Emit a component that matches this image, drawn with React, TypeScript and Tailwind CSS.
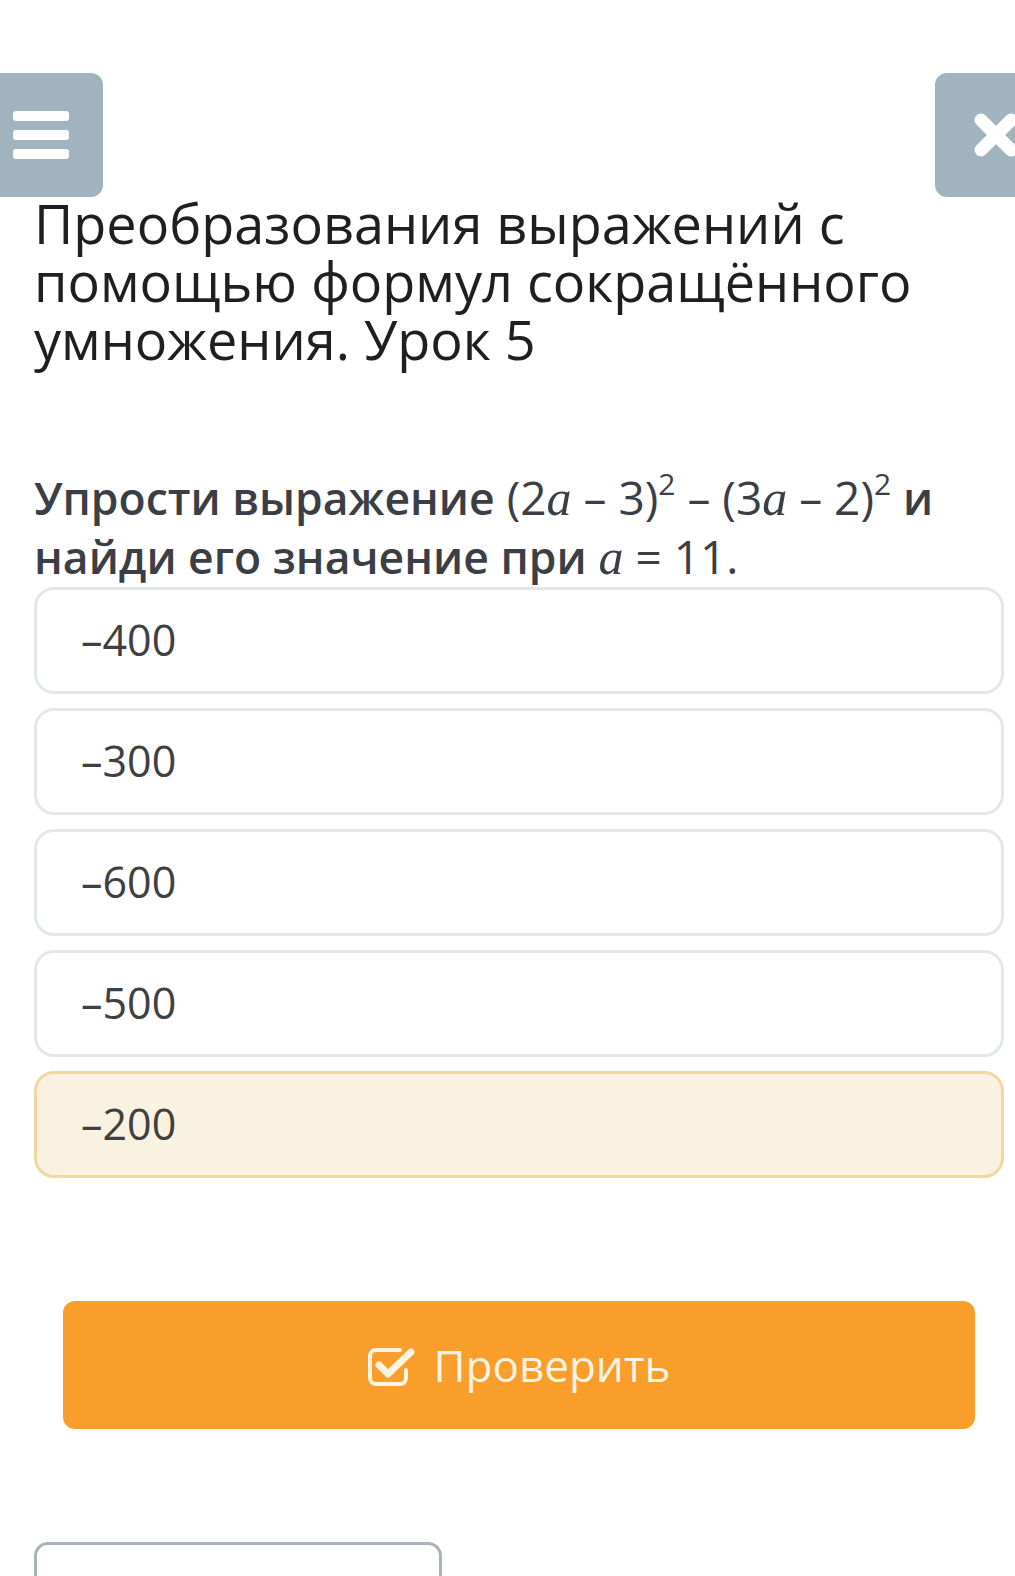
import React from "react";

const options = ["–400", "–300", "–600", "–500", "–200"];
const selected = 4;

const MathA: React.FC = () => (
  <span className="font-['Liberation_Serif',serif] italic text-[50px] font-normal">a</span>
);

const Sq: React.FC = () => (
  <span className="relative top-[-20px] text-[30px] leading-none">2</span>
);

const App: React.FC = () => {
  return (
    <div className="w-[1015px] h-[1576px] overflow-hidden bg-white font-['Open_Sans',sans-serif]">
      {/* top bar */}
      <div className="flex justify-between pt-[73px]">
        <button className="w-[103px] h-[124px] bg-[#a0b3bf] rounded-r-[12px] flex flex-col justify-center gap-[9px] pl-[13px]">
          <span className="block w-[56px] h-[10px] rounded-[3px] bg-white" />
          <span className="block w-[56px] h-[10px] rounded-[3px] bg-white" />
          <span className="block w-[56px] h-[10px] rounded-[3px] bg-white" />
        </button>
        <button className="w-[80px] h-[124px] bg-[#a0b3bf] rounded-l-[12px] overflow-hidden flex items-center pl-[38px]">
          <svg width="46" height="46" viewBox="0 0 46 46" className="shrink-0">
            <path
              d="M8 8 L38 38 M38 8 L8 38"
              stroke="white"
              strokeWidth="13"
              strokeLinecap="round"
            />
          </svg>
        </button>
      </div>

      {/* title */}
      <h1 className="px-[34px] mt-[-3px] text-[54px] leading-[58px] text-[#1f1f1f] font-normal">
        Преобразования выражений с помощью формул сокращённого умножения. Урок 5
      </h1>

      {/* question */}
      <div className="pl-[34px] pr-[20px] mt-[100px] text-[46px] leading-[58px] text-[#3b3f45]">
        <b className="font-semibold text-[44.5px]">Упрости выражение</b>{" "}
        <span>
          (2<MathA /> – 3)<Sq /> – (3<MathA /> – 2)<Sq />
        </span>{" "}
        <b className="font-semibold text-[44.5px]">и найди его значение при</b>{" "}
        <span>
          <MathA /> = 11.
        </span>
      </div>

      {/* answer options */}
      <div className="flex flex-col gap-[14px] mt-[1px] pl-[34px] pr-[11px]">
        {options.map((opt, i) => (
          <div
            key={opt}
            className={
              i === selected
                ? "h-[107px] flex items-center pl-[44px] rounded-[20px] border-[3px] border-[#efd8a4] bg-[#faf2e1] text-[43px] text-[#404040]"
                : "h-[107px] flex items-center pl-[44px] rounded-[20px] border-[3px] border-[#e4e7e9] bg-white text-[43px] text-[#404040]"
            }
          >
            {opt}
          </div>
        ))}
      </div>

      {/* check button */}
      <div className="pl-[63px] pr-[40px] mt-[123px]">
        <button className="w-full h-[128px] rounded-[12px] bg-[#f99d2b] flex items-center justify-center gap-[18px] text-[44px] text-[#fdf3e3]">
          <svg width="48" height="40" viewBox="0 0 48 40" className="mt-[2px]">
            <path
              d="M32 4 H8 a6 6 0 0 0 -6 6 V32 a6 6 0 0 0 6 6 H32 a6 6 0 0 0 6 -6 V24"
              fill="none"
              stroke="#fdf3e3"
              strokeWidth="4"
              strokeLinecap="round"
            />
            <path
              d="M11 19 L20 28 L43 6"
              fill="none"
              stroke="#fdf3e3"
              strokeWidth="7"
              strokeLinecap="round"
              strokeLinejoin="round"
            />
          </svg>
          <span>Проверить</span>
        </button>
      </div>

      {/* bottom box */}
      <div className="ml-[34px] mt-[113px] w-[408px] h-[80px] rounded-[14px] border-[3px] border-[#a9b4ba]" />
    </div>
  );
};

export default App;
